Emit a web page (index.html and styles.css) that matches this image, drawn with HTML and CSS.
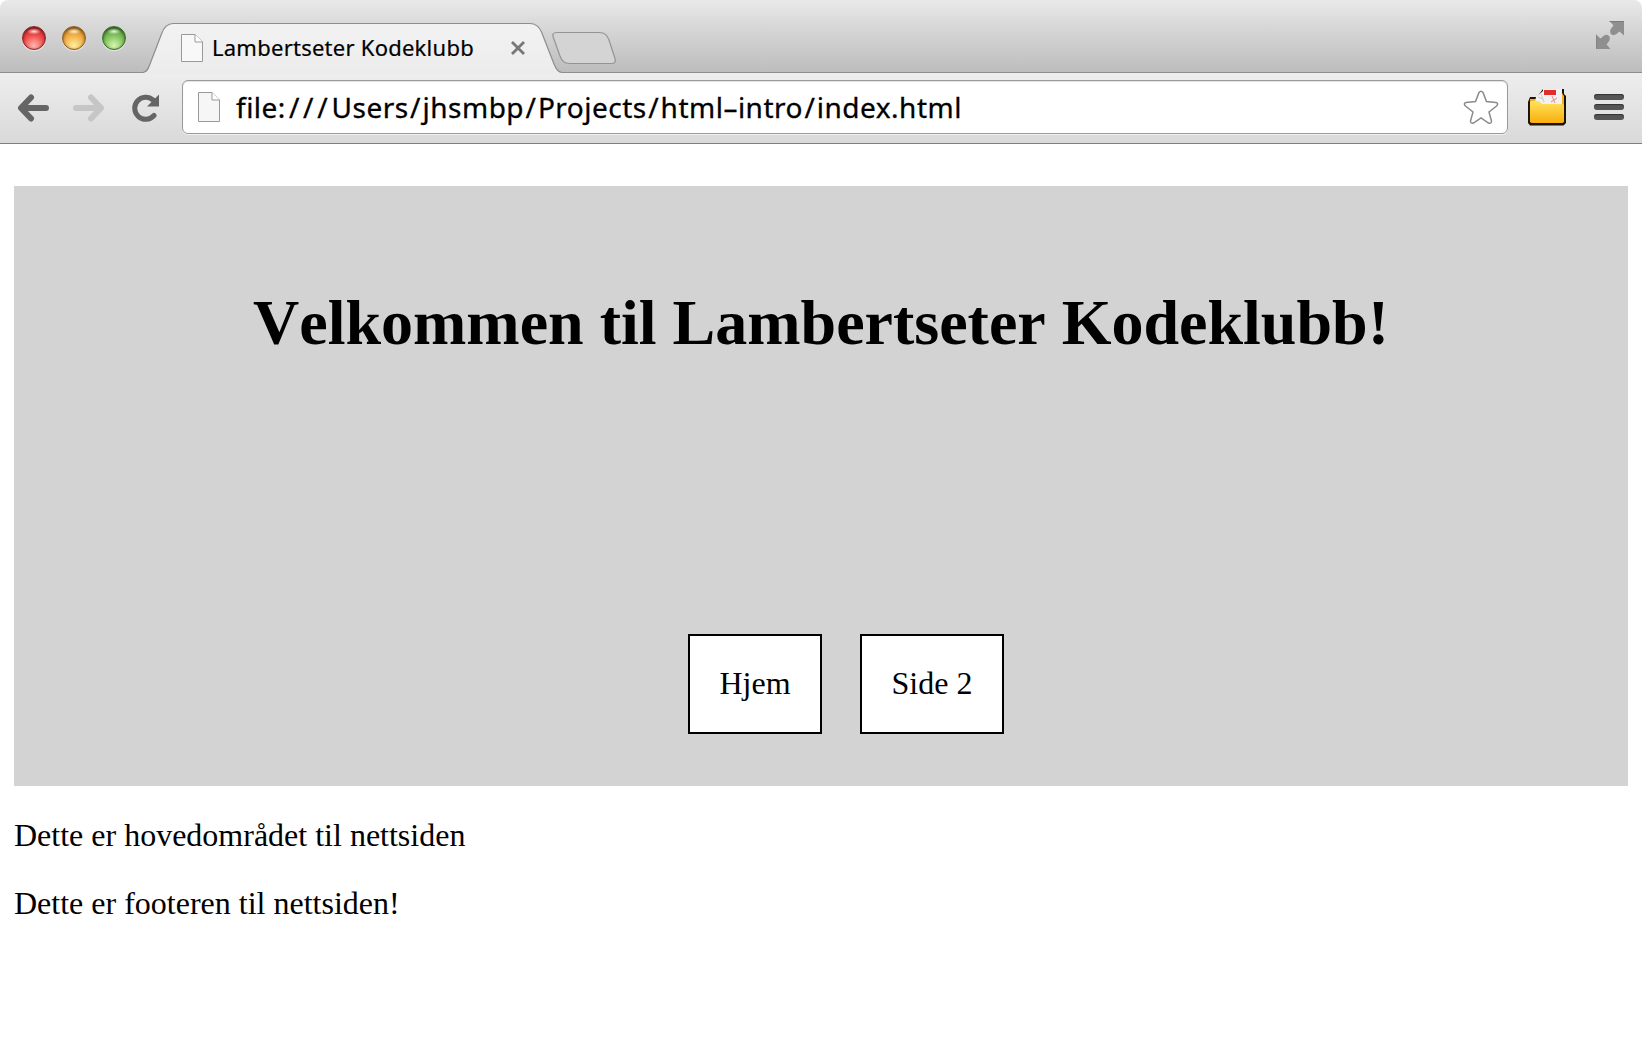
FILE: index.html
```html
<!DOCTYPE html>
<html lang="no">
<head>
<meta charset="utf-8">
<title>Lambertseter Kodeklubb</title>
<link rel="stylesheet" href="styles.css">
</head>
<body>
<div class="window">
  <header class="strip">
    <div class="lights"><i class="light red"></i><i class="light amber"></i><i class="light green"></i></div>
    <div class="tab">
      <svg class="tab-shape" width="422" height="52" viewBox="0 0 422 52">
        <defs><linearGradient id="t" x1="0" y1="0" x2="0" y2="1"><stop offset="0" stop-color="#f2f2f2"/><stop offset="1" stop-color="#ececec"/></linearGradient></defs>
        <path d="M0 50.500C4 50.500 5.500 46 7 42L18.500 12C21 5 24 1.500 30 1.500H387C393 1.500 396 4.500 398.500 10L411 42C413 47 415 50.500 419 50.500V52H0Z" fill="url(#t)"/>
        <path d="M0 50.500C4 50.500 5.500 46 7 42L18.500 12C21 5 24 1.500 30 1.500H387C393 1.500 396 4.500 398.500 10L411 42C413 47 415 50.500 419 50.500H422" fill="none" stroke="#8d8d8d" stroke-width="1.2"/>
      </svg>
      <svg class="page-icon" width="22" height="28" viewBox="0 0 22 28"><path d="M.5.5H14L21.500 8V27.500H.5Z" fill="#f8f8f8" stroke="#999"/><path d="M14 .5V8H21.500" fill="#fff" stroke="#999"/></svg>
      <span class="tab-title">Lambertseter Kodeklubb</span>
      <svg class="close" width="14" height="14" viewBox="0 0 14 14"><path d="M1 1L13 13M13 1L1 13" stroke="#777" stroke-width="2.8"/></svg>
    </div>
    <svg class="new-tab" width="66" height="34" viewBox="0 0 66 34"><path d="M5 1.500H47C53 1.500 55 4 57 9L62.500 26C64 30 63.500 32.500 60 32.500H18C12 32.500 10 30 8 25L1.500 7C0 3 1 1.500 5 1.500Z" fill="#d4d4d4" stroke="#949494" stroke-width="1.2"/></svg>
    <svg class="expand" width="28" height="28" viewBox="0 0 28 28"><path d="M13.500 0H28V14.500L23.500 10.500L20.500 13Q17 15.500 14.500 12.500Q13 9 17.500 4.500ZM0 13.500L4.500 17.500L7.500 15Q11 12.500 13.500 15.500Q15 19 10.500 23.500L14.500 28H0Z" fill="#8f8f8f"/><path d="M13.500 .5H28M0 13.500V28" stroke="#7b7b7b" fill="none"/></svg>
  </header>
  <div class="toolbar">
    <svg class="back" width="32" height="28" viewBox="0 0 32 28"><path d="M28 14H5M13 3.500L3 14L13 24.500" fill="none" stroke="#656565" stroke-width="6" stroke-linecap="round" stroke-linejoin="round"/></svg>
    <svg class="forward" width="32" height="28" viewBox="0 0 32 28"><path d="M3 14H27M18 3.500L28 14L18 24.500" fill="none" stroke="#c6c6c6" stroke-width="6" stroke-linecap="round" stroke-linejoin="round"/></svg>
    <svg class="reload" width="28" height="28" viewBox="0 0 28 28"><path d="M22 21.500A11 11 0 1 1 21 6" fill="none" stroke="#656565" stroke-width="5" stroke-linecap="round"/><path d="M27 .5V12.500H15Z" fill="#656565"/></svg>
    <div class="omnibox">
      <svg class="page-icon" width="22" height="30" viewBox="0 0 22 30"><path d="M.5.5H14L21.500 8V29.500H.5Z" fill="#f6f6f6" stroke="#999"/><path d="M14 .5V8H21.500" fill="#fff" stroke="#999"/></svg>
      <span class="url">file:<b class="root">///</b>Users<b class="s">/</b>jhsmbp<b class="s">/</b>Projects<b class="s">/</b>html–intro<b class="s">/</b>index.html</span>
      <svg class="star" width="36" height="34" viewBox="0 0 36 34"><path d="M16 2.500Q18 0 20 2.500L23.500 11.500L33 12.500Q36 13.500 33.500 16L26 22L28.500 31Q28.500 34 25.500 33L18 28L10.500 33Q7.500 34 7.500 31L10 22L2.500 16Q0 13.500 3 12.500L12.500 11.500Z" fill="#fff" stroke="#8a8a8a" stroke-width="1.500"/></svg>
    </div>
    <svg class="folder" width="38" height="38" viewBox="0 0 38 38">
      <defs><linearGradient id="f" x1="0" y1="0" x2="0" y2="1"><stop offset="0" stop-color="#ffe25e"/><stop offset="1" stop-color="#f9ae0c"/></linearGradient></defs>
      <path d="M0 14L2 9H9L15 1H36V6L38 8V35L35.500 37.500H2L0 35Z" fill="#1c1503"/>
      <path d="M2 11H9L15 6L34 5L36 8V34H2Z" fill="#f2b21e"/>
      <path d="M7 14L8 9L15 3V1H34V17H7Z" fill="#f1f1f1"/>
      <path d="M10 9L15 11M13 6L16 14" stroke="#c9c9c9" fill="none"/>
      <path d="M16 2H28V7H16Z" fill="#e32d2d"/>
      <path d="M24 8L27 15M23 14L29 10" stroke="#e88" fill="none"/>
      <path d="M2 15Q2 13 4 13H11L14 16H34Q36 16 36 18V33Q36 35 34 35H4Q2 35 2 33Z" fill="url(#f)"/>
    </svg>
    <div class="menu"><i></i><i></i><i></i></div>
  </div>
  <main class="page">
    <section class="hero">
      <h1>Velkommen til Lambertseter Kodeklubb!</h1>
      <nav><a>Hjem</a><a>Side 2</a></nav>
    </section>
    <p>Dette er hovedområdet til nettsiden</p>
    <p>Dette er footeren til nettsiden!</p>
  </main>
</div>
</body>
</html>
```
FILE: styles.css
```css
* { box-sizing: border-box; }
body { margin: 0; background: #fff; color: #000; font-family: "Liberation Serif", serif; }
svg { display: block; flex: none; }
.window { width: 1642px; height: 1062px; overflow: hidden; }
.strip {
  height: 73px; display: flex; align-items: flex-start; padding-left: 22px;
  background: linear-gradient(#e9e9e9, #d6d6d6 40%, #bdbdbd);
  border-bottom: 1px solid #8d8d8d; border-radius: 8px 8px 0 0;
}
.lights { display: flex; gap: 16px; padding-top: 26px; width: 121px; flex: none; }
.light { width: 24px; height: 24px; border-radius: 50%; box-shadow: inset 0 1px 3px rgba(0,0,0,.55), 0 1px 1px rgba(255,255,255,.6); }
.red { background: radial-gradient(ellipse 7px 3px at 50% 20%, rgba(255,255,255,.85), transparent), radial-gradient(circle at 50% 85%, #ffb9b0, #f04a48 50%, #b52022); border: 1px solid #8d2325; }
.amber { background: radial-gradient(ellipse 7px 3px at 50% 20%, rgba(255,255,255,.85), transparent), radial-gradient(circle at 50% 85%, #fff0a0, #f2ad43 50%, #b8711b); border: 1px solid #8f5c1d; }
.green { background: radial-gradient(ellipse 7px 3px at 50% 20%, rgba(255,255,255,.85), transparent), radial-gradient(circle at 50% 85%, #d8f7b0, #7cc05a 50%, #3f7f2a); border: 1px solid #3a6b27; }
.tab { position: relative; width: 422px; height: 52px; margin-top: 22px; display: flex; align-items: flex-start; padding: 12px 0 0 38px; flex: none; }
.tab-shape { position: absolute; left: 0; top: 0; }
.tab > .page-icon, .tab-title, .close { position: relative; }
.tab-title { font: 22px/30px "Noto Sans", sans-serif; margin-left: 9px; width: 299px; margin-top: -2px; white-space: nowrap; letter-spacing: .25px; -webkit-text-stroke: .2px #000; }
.close { margin-top: 7px; }
.new-tab { margin: 31px 0 0 -13px; }
.expand { margin: 21px 18px 0 auto; }
.toolbar {
  height: 71px; display: flex; align-items: flex-start; padding-left: 18px;
  background: linear-gradient(#eeeeee, #d9d9d9); border-bottom: 1px solid #7e7e7e;
}
.back { margin-top: 21px; }
.forward { margin: 21px 0 0 23px; }
.reload { margin: 21px 0 0 27px; }
.omnibox {
  width: 1326px; height: 54px; margin: 7px 0 0 22px; border: 1px solid #9a9a9a; border-radius: 6px;
  background: #fff; box-shadow: 0 1px 0 rgba(255,255,255,.6), inset 0 1px 1px rgba(0,0,0,.12);
  display: flex; align-items: center; padding: 0 8px 0 15px; flex: none;
}
.url { font: 28px/40px "Noto Sans", sans-serif; letter-spacing: .5px; margin-left: 16px; white-space: nowrap; -webkit-text-stroke: .3px #000; }
.root { font-weight: 400; letter-spacing: 3.8px; margin-left: 3px; }
.s { font-weight: 400; letter-spacing: 2px; margin-left: 1.4px; }
.star { margin-left: auto; }
.folder { margin: 15px 0 0 20px; }
.menu { display: flex; flex-direction: column; gap: 4px; margin: 21px 0 0 28px; }
.menu i { width: 30px; height: 6px; border-radius: 3px; background: #555; box-shadow: inset 0 1px 1px #333; }
.page { padding: 42px 14px 0; font-size: 32px; line-height: 36px; font-kerning: none; }
.hero { height: 600px; background: #d3d3d3; display: flex; flex-direction: column; justify-content: space-between; align-items: center; padding: 100px 0 52px; }
h1 { margin: 0; font-size: 64px; line-height: 74px; white-space: nowrap; }
nav { display: flex; gap: 38px; padding-left: 50px; }
nav a { border: 2px solid #000; background: #fff; padding: 29px 0 31px; width: 144px; height: 100px; text-align: center; white-space: nowrap; }
nav a:first-child { width: 134px; }
p { margin: 32px 0 0; }
.hero + p { margin-top: 31px; }
```
